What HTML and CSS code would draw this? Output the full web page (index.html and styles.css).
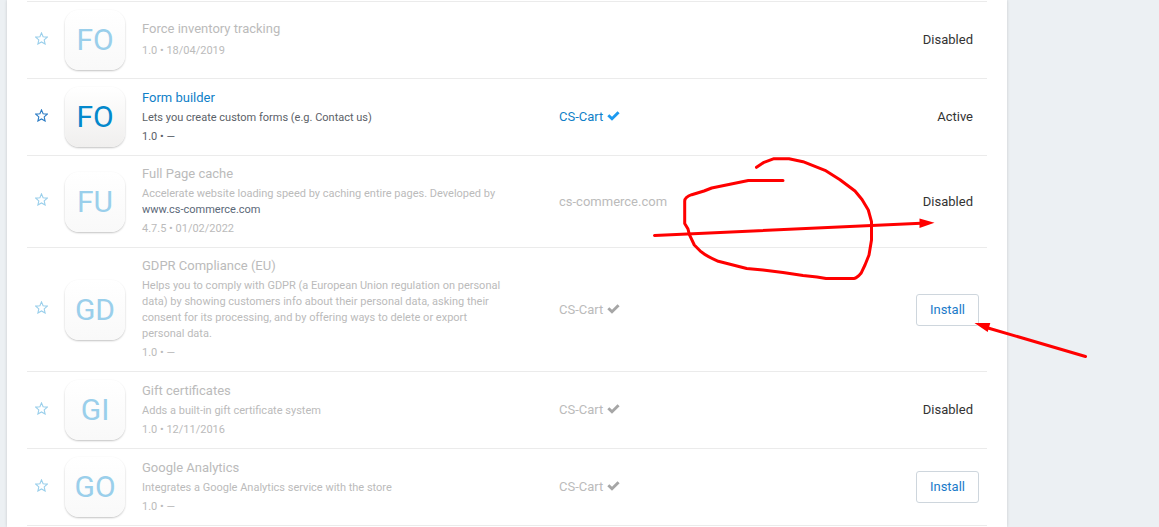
FILE: index.html
```html
<!DOCTYPE html>
<html lang="en">
<head>
<meta charset="utf-8">
<title>Add-ons</title>
<link rel="stylesheet" href="styles.css">
</head>
<body>
<svg class="sprite" aria-hidden="true">
  <symbol id="star" viewBox="0 0 13 13"><path d="M6.5 0.900 L8.1 4.7 L12.3 5.1 L9.2 7.9 L10.1 12 L6.5 9.9 L2.900 12 L3.8 7.9 L0.7 5.1 L4.9 4.7 Z" fill="none" stroke="currentColor" stroke-width="1.1"/></symbol>
  <symbol id="check" viewBox="0 0 13 10"><path d="M0.3 5.3 L2.3 3.3 L5 5.8 L10.5 0.3 L12.6 2.3 L5 9.8 Z" fill="currentColor"/></symbol>
</svg>
<main class="panel">
  <table class="addons">
    <colgroup><col class="col-star"><col class="col-icon"><col class="col-info"><col class="col-vendor"><col class="col-status"></colgroup>
    <tbody>
      <tr class="off">
        <td class="star-cell"><button class="star" aria-label="Favorite Force inventory tracking"><svg><use href="#star"/></svg></button></td>
        <td><div class="tile"><span>FO</span></div></td>
        <td><div class="title">Force inventory tracking</div><div class="version">1.0 • 18/04/2019</div></td>
        <td></td>
        <td class="status">Disabled</td>
      </tr>
      <tr>
        <td class="star-cell"><button class="star" aria-label="Favorite Form builder"><svg><use href="#star"/></svg></button></td>
        <td><div class="tile"><span>FO</span></div></td>
        <td><div class="title"><a href="#form-builder">Form builder</a></div><div class="desc">Lets you create custom forms (e.g. Contact us)</div><div class="version">1.0 • —</div></td>
        <td><a class="vendor" href="#cs-cart">CS-Cart <svg class="check"><use href="#check"/></svg></a></td>
        <td class="status">Active</td>
      </tr>
      <tr class="off">
        <td class="star-cell"><button class="star" aria-label="Favorite Full Page cache"><svg><use href="#star"/></svg></button></td>
        <td><div class="tile"><span>FU</span></div></td>
        <td><div class="title">Full Page cache</div><div class="desc">Accelerate website loading speed by caching entire pages. Developed by <a href="#cs-commerce">www.cs-commerce.com</a></div><div class="version">4.7.5 • 01/02/2022</div></td>
        <td><span class="vendor">cs-commerce.com</span></td>
        <td class="status">Disabled</td>
      </tr>
      <tr class="off">
        <td class="star-cell"><button class="star" aria-label="Favorite GDPR Compliance (EU)"><svg><use href="#star"/></svg></button></td>
        <td><div class="tile"><span>GD</span></div></td>
        <td><div class="title">GDPR Compliance (EU)</div><div class="desc">Helps you to comply with GDPR (a European Union regulation on personal data) by showing customers info about their personal data, asking their consent for its processing, and by offering ways to delete or export personal data.</div><div class="version">1.0 • —</div></td>
        <td><span class="vendor">CS-Cart <svg class="check"><use href="#check"/></svg></span></td>
        <td class="action"><button class="install">Install</button></td>
      </tr>
      <tr class="off">
        <td class="star-cell"><button class="star" aria-label="Favorite Gift certificates"><svg><use href="#star"/></svg></button></td>
        <td><div class="tile"><span>GI</span></div></td>
        <td><div class="title">Gift certificates</div><div class="desc">Adds a built-in gift certificate system</div><div class="version">1.0 • 12/11/2016</div></td>
        <td><span class="vendor">CS-Cart <svg class="check"><use href="#check"/></svg></span></td>
        <td class="status">Disabled</td>
      </tr>
      <tr class="off">
        <td class="star-cell"><button class="star" aria-label="Favorite Google Analytics"><svg><use href="#star"/></svg></button></td>
        <td><div class="tile"><span>GO</span></div></td>
        <td><div class="title">Google Analytics</div><div class="desc">Integrates a Google Analytics service with the store</div><div class="version">1.0 • —</div></td>
        <td><span class="vendor">CS-Cart <svg class="check"><use href="#check"/></svg></span></td>
        <td class="action"><button class="install">Install</button></td>
      </tr>
    </tbody>
  </table>
</main>
<svg class="marks" width="1159" height="527" viewBox="0 0 1159 527" aria-hidden="true">
  <g fill="none" stroke="#f00" stroke-width="3" stroke-linecap="round" stroke-linejoin="round">
    <path d="M756.5 167.3 L764 162.3 L774 158.7 H789 L803 161.7 L825 170.3 L840 179.7 L855 191 L862 199.5 L868.3 210 L871.5 221.7 V240 L869 255 L865 265 L861 273.3 Q857 278 854 278.5 H826 L817 277 L803 275.5 L783 272.5 L763 270 L746.7 268.5 L718.3 261.3 Q706 256 701 251.7 L694.3 245 L689.3 234.3 L688 229 L684.7 223.5 V201 Q685 197 691.7 194.7 L704 191 L711.7 188 L730 184.3 L748.3 180.5 H783"/>
    <path d="M654.5 235.5 L921 223.3"/>
    <path d="M1085.5 356.5 L988 328"/>
  </g>
  <path fill="#f00" d="M919.5 218.5 L934.5 222.7 L919.5 228 Z M974.5 323 H990.3 L987.7 332 Z"/>
</svg>
</body>
</html>
```
FILE: styles.css
```css
* { box-sizing: border-box; }

body {
  margin: 0;
  background: #ecf0f3;
  color: #333;
  font: 13px/20px Roboto, "Liberation Sans", sans-serif;
  height: 100vh;
  overflow: hidden;
}

a { color: #0f7fc8; text-decoration: none; }

.sprite { display: none; }

.panel {
  min-height: 100vh;
  margin: 0 152px 0 7px;
  padding: 1px 20px 0;
  background: #fff;
  box-shadow: 0 0 3px rgba(0, 0, 0, 0.16);
}

.addons {
  width: 100%;
  table-layout: fixed;
  border-collapse: separate;
  border-spacing: 0;
  border-top: 1px solid #ebebeb;
}

.col-star { width: 38px; }
.col-icon { width: 77px; }
.col-info { width: 417px; }
.col-status { width: 120px; }

td {
  padding: 8px 0;
  border-bottom: 1px solid #ebebeb;
  vertical-align: middle;
}

.star-cell { padding: 8px 0 12px 8px; }

.star {
  display: block;
  padding: 0;
  border: 0;
  background: none;
  color: #2a7bc4;
}

.star svg { display: block; width: 13px; height: 13px; }

.tile {
  display: flex;
  align-items: center;
  justify-content: center;
  width: 60px;
  height: 60px;
  border-radius: 14px;
  background: linear-gradient(#fff, #f0efee);
  box-shadow: 0 1px 2px rgba(0, 0, 0, 0.24);
  color: #0388cc;
  font-size: 30px;
}

.title { margin-bottom: 2px; }

.desc {
  max-width: 368px;
  margin-bottom: 1px;
  color: #5b6168;
  font-size: 11px;
  line-height: 16px;
}

.desc a { color: #5b6878; }

.version { color: #5b6168; font-size: 11px; }

.check { width: 13px; height: 10px; color: #1c9af0; }

.status { padding-right: 14px; text-align: right; }
.action { padding-right: 8px; text-align: right; }

.install {
  height: 32px;
  padding: 0 13px;
  border: 1px solid #ced6dd;
  border-radius: 3px;
  background: #fff;
  color: #1a7bc9;
  font: inherit;
}

.off .star { color: #9acfeb; }

.off .tile {
  background: linear-gradient(#fff, #f9f9f9);
  color: #9acfeb;
}

.off .title,
.off .desc,
.off .version,
.off .vendor { color: #bbb; }

.off .check { color: #a6a6a6; }

.marks {
  position: absolute;
  top: 0;
  left: 0;
  pointer-events: none;
}
```
